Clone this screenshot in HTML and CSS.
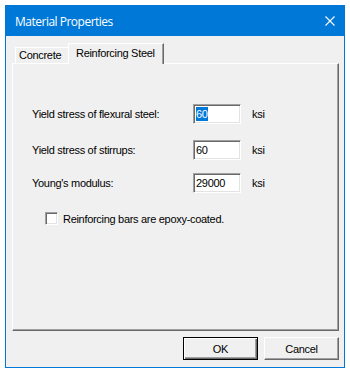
FILE: index.html
```html
<!DOCTYPE html>
<html>
<head>
<meta charset="utf-8">
<link rel="stylesheet" href="styles.css">
</head>
<body>
<div class="window">
  <div class="titlebar">
    <span class="title">Material Properties</span>
    <svg class="close" width="10" height="10" viewBox="0 0 10 10"><path d="M0.5 0.5 L9.5 9.5 M9.5 0.5 L0.5 9.5" stroke="#fff" stroke-width="1.1" fill="none"/></svg>
  </div>
  <div class="content">
    <div class="tabs">
      <div class="tab">Concrete</div>
      <div class="tab active">Reinforcing Steel</div>
    </div>
    <div class="panel">
      <div class="row r1">
        <span class="label">Yield stress of flexural steel:</span>
        <span class="input"><span class="sel">60</span></span>
        <span class="unit">ksi</span>
      </div>
      <div class="row r2">
        <span class="label">Yield stress of stirrups:</span>
        <span class="input">60</span>
        <span class="unit">ksi</span>
      </div>
      <div class="row r3">
        <span class="label">Young's modulus:</span>
        <span class="input">29000</span>
        <span class="unit">ksi</span>
      </div>
      <div class="check">
        <span class="box"></span>
        <span>Reinforcing bars are epoxy-coated.</span>
      </div>
    </div>
    <div class="buttons">
      <div class="btn default">OK</div>
      <div class="btn">Cancel</div>
    </div>
  </div>
</div>
</body>
</html>
```
FILE: styles.css
```css
html, body {
  margin: 0;
  padding: 0;
  background: #ffffff;
}
body {
  font-family: "Liberation Sans", Arial, sans-serif;
  font-size: 11px;
  letter-spacing: -0.3px;
  color: #000;
}
.window {
  margin: 5px;
  width: 340px;
  height: 363px;
  box-sizing: border-box;
  border: 1px solid #0078d7;
  background: #f0f0f0;
  display: flex;
  flex-direction: column;
}
.titlebar {
  height: 30px;
  flex: none;
  background: #0078d7;
  color: #fff;
  display: flex;
  align-items: center;
  justify-content: space-between;
  padding: 0 9px 0 9px;
}
.title {
  font-family: "Open Sans", "Noto Sans", sans-serif;
  font-size: 12px;
  letter-spacing: -0.5px;
}
.close {
  display: block;
}
.content {
  padding: 7px 5px 0 6px;
  display: flex;
  flex-direction: column;
}
.tabs {
  display: flex;
  align-items: flex-end;
  height: 20px;
  padding-left: 3px;
  position: relative;
  z-index: 1;
}
.tab {
  box-sizing: border-box;
  height: 16px;
  width: 53px;
  border-top: 1px solid #fff;
  border-left: 1px solid #fff;
  padding: 0 0 0 3px;
  line-height: 15px;
}
.tab.active {
  height: 21px;
  width: 96px;
  margin-bottom: -1px;
  background: #f0f0f0;
  border-right: 1px solid #696969;
  box-shadow: inset -1px 0 0 #a0a0a0;
  padding: 1px 0 0 7px;
  line-height: 17px;
}
.panel {
  box-sizing: border-box;
  height: 268px;
  width: 327px;
  border-top: 1px solid #fff;
  border-left: 1px solid #fff;
  border-right: 1px solid #696969;
  border-bottom: 1px solid #696969;
  box-shadow: inset -1px -1px 0 #a0a0a0;
  padding: 40px 0 0 19px;
  display: flex;
  flex-direction: column;
}
.row {
  display: flex;
  align-items: center;
  height: 20px;
}
.r2 { margin-top: 16px; }
.r3 { margin-top: 13px; }
.label {
  width: 161px;
}
.input {
  box-sizing: border-box;
  width: 48px;
  height: 20px;
  background: #fff;
  border-top: 1px solid #a0a0a0;
  border-left: 1px solid #a0a0a0;
  border-right: 1px solid #fff;
  border-bottom: 1px solid #fff;
  box-shadow: inset 1px 1px 0 #696969, inset -1px -1px 0 #e3e3e3;
  padding: 2px 0 0 2px;
  line-height: 14px;
  margin-right: 11px;
}
.sel {
  background: #0078d7;
  color: #fff;
  display: inline-block;
  line-height: 14px;
}
.check {
  display: flex;
  align-items: center;
  margin-top: 19px;
  padding-left: 13px;
}
.box {
  box-sizing: border-box;
  width: 13px;
  height: 13px;
  background: #fff;
  border-top: 1px solid #a0a0a0;
  border-left: 1px solid #a0a0a0;
  border-right: 1px solid #fff;
  border-bottom: 1px solid #fff;
  box-shadow: inset 1px 1px 0 #696969, inset -1px -1px 0 #e3e3e3;
  margin-right: 5px;
}
.buttons {
  display: flex;
  justify-content: flex-end;
  gap: 6px;
  margin-top: 6px;
}
.btn {
  box-sizing: border-box;
  width: 75px;
  height: 23px;
  display: flex;
  align-items: center;
  justify-content: center;
  border-top: 1px solid #fff;
  border-left: 1px solid #fff;
  border-right: 1px solid #696969;
  border-bottom: 1px solid #696969;
  box-shadow: inset -1px -1px 0 #a0a0a0;
  background: #f0f0f0;
}
.btn.default {
  border: 1px solid #000;
  box-shadow: inset 1px 1px 0 #fff, inset -1px -1px 0 #696969, inset -2px -2px 0 #a0a0a0;
}
```
